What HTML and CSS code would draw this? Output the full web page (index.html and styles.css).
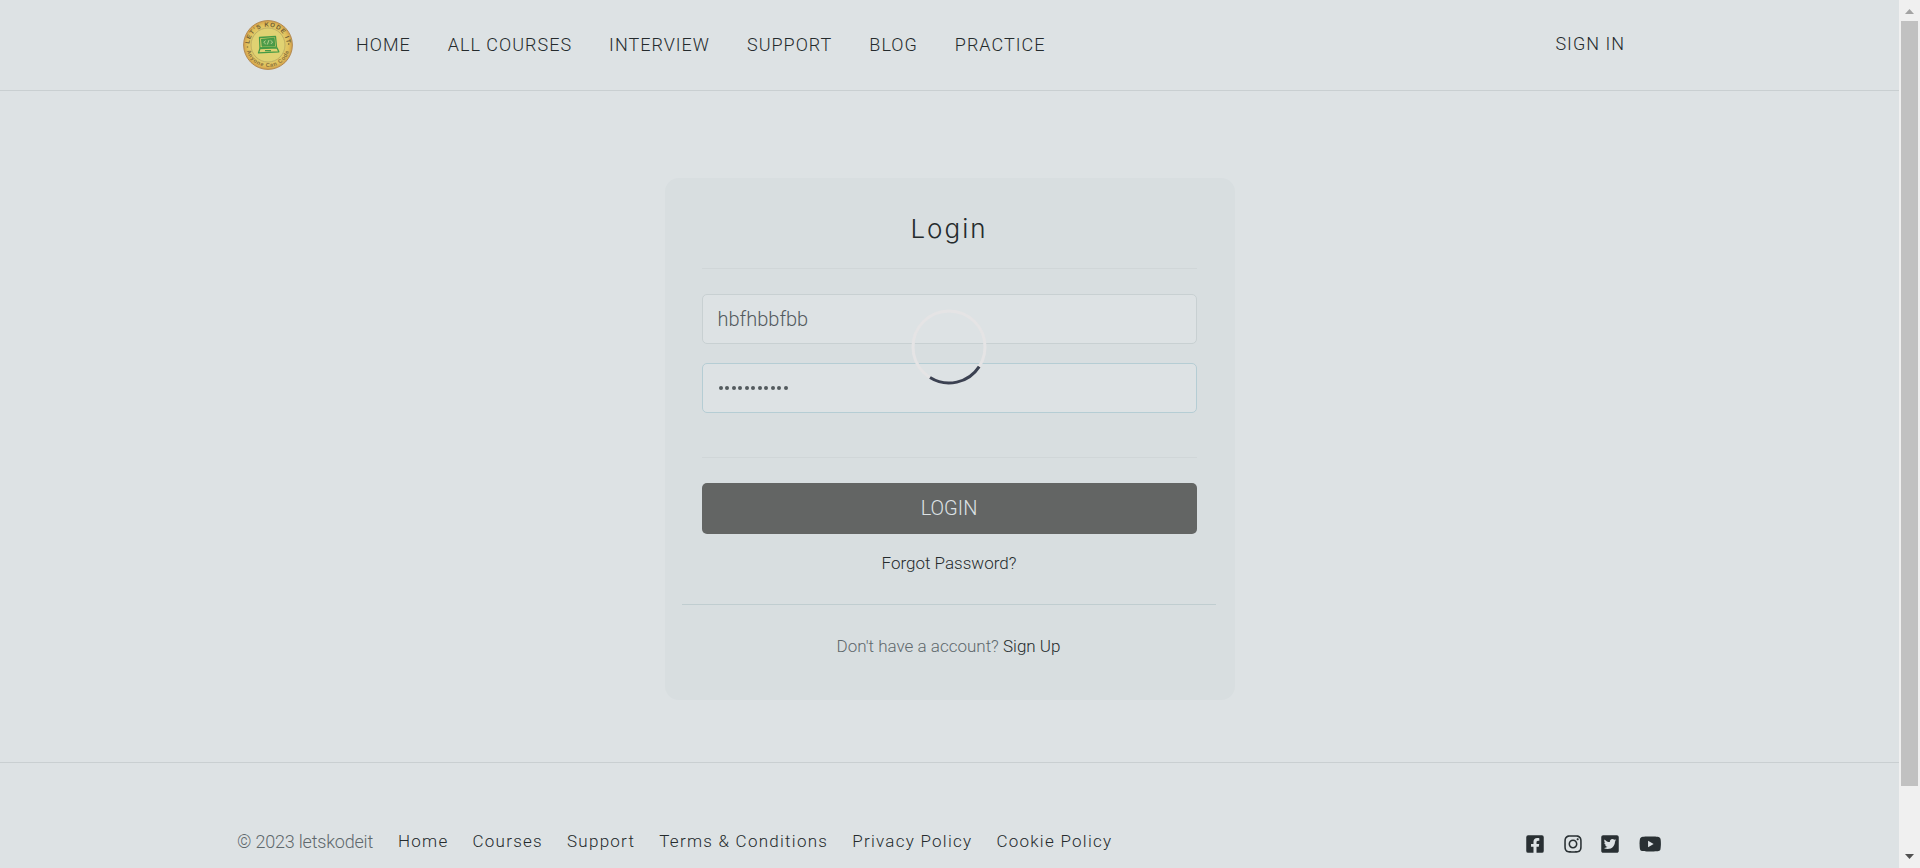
FILE: index.html
```html
<!DOCTYPE html>
<html lang="en">
<head>
<meta charset="utf-8">
<title>Login</title>
<link rel="stylesheet" href="styles.css">
</head>
<body>
<div class="window">
  <div class="page">
    <header class="header">
      <svg class="logo" viewBox="0 0 50 50">
        <defs>
          <path id="arc-top" d="M6.800 29A18.600 18.600 0 1 1 43.200 29"/>
          <path id="arc-bottom" d="M3 25A22 22 0 0 0 47 25"/>
          <radialGradient id="gold"><stop offset=".6" stop-color="#e1d373"/><stop offset=".85" stop-color="#e0c05c"/><stop offset="1" stop-color="#d4a04a"/></radialGradient>
        </defs>
        <circle cx="25" cy="25" r="24.400" fill="url(#gold)" stroke="#b28a51" stroke-width="1"/>
        <circle cx="25" cy="25" r="17" fill="#e0d272" stroke="#a9995a" stroke-width=".6"/>
        <text class="logo-text"><textPath href="#arc-top" startOffset="50%" text-anchor="middle">LET'S KODE IT</textPath></text>
        <text class="logo-text logo-text-low"><textPath href="#arc-bottom" startOffset="50%" text-anchor="middle">Anyone Can Code</textPath></text>
        <circle cx="4.500" cy="27" r=".8" fill="#8b7440"/><circle cx="45.700" cy="24" r=".8" fill="#6c5b35"/>
        <g fill="none" stroke="#459a45" stroke-width="1.300" stroke-linejoin="round">
          <path d="M16.500 17.500 32.500 16.500 33.500 27 17 28Z"/>
          <path d="M18.700 19.300 31 18.500 31.500 25.500 19.200 26Z" fill="#4f9c4c"/>
          <path d="M17 28.500 34 27.800 35.800 31.800 15.500 32.900ZM22 30.700H28"/>
        </g>
        <path d="M22.500 20.500 20.800 22.400 22.800 24M27.500 20.300 29.600 22 27.900 24M26 20 24.300 24.500" fill="none" stroke="#dce5a5" stroke-width=".7"/>
      </svg>
      <nav class="nav">
        <a>HOME</a><a>ALL COURSES</a><a>INTERVIEW</a><a>SUPPORT</a><a>BLOG</a><a>PRACTICE</a>
      </nav>
      <a class="sign-in">SIGN IN</a>
    </header>
    <main class="main">
      <section class="card">
        <h1 class="title">Login</h1>
        <form class="form">
          <div class="field"><span>hbfhbbfbb</span></div>
          <div class="field focused"><span class="dots"><i></i><i></i><i></i><i></i><i></i><i></i><i></i><i></i><i></i><i></i><i></i></span></div>
        </form>
        <div class="button">LOGIN</div>
        <a class="forgot">Forgot Password?</a>
        <p class="signup">Don't have a account? <a>Sign Up</a></p>
        <svg class="spinner" viewBox="0 0 76 76" fill="none" stroke-width="3">
          <circle cx="38" cy="38" r="36" stroke="#e5e4e5"/>
          <path d="M68.200 57.600A36 36 0 0 1 19 68.600" stroke="#3b4151"/>
        </svg>
      </section>
    </main>
    <footer class="footer">
      <span class="copyright">© 2023 letskodeit</span>
      <nav class="links">
        <a>Home</a><a>Courses</a><a>Support</a><a>Terms &amp; Conditions</a><a>Privacy Policy</a><a>Cookie Policy</a>
      </nav>
      <div class="social">
        <svg viewBox="0 0 448 512"><path d="M400 32H48A48 48 0 0 0 0 80v352a48 48 0 0 0 48 48h137.250V327.690h-63V256h63v-54.640c0-62.150 37-96.480 93.670-96.480 27.140 0 55.520 4.840 55.520 4.840v61h-31.270c-30.810 0-40.420 19.120-40.420 38.730V256h68.780l-11 71.690h-57.780V480H400a48 48 0 0 0 48-48V80a48 48 0 0 0-48-48z"/></svg>
        <svg viewBox="0 0 448 512"><path d="M224.100 141c-63.600 0-114.900 51.300-114.900 114.900s51.300 114.900 114.900 114.900S339 319.500 339 255.900 287.700 141 224.100 141zm0 189.600c-41.100 0-74.700-33.500-74.700-74.700s33.500-74.700 74.700-74.700 74.700 33.500 74.700 74.700-33.600 74.700-74.700 74.700zm146.400-194.300c0 14.900-12 26.800-26.800 26.800-14.900 0-26.800-12-26.800-26.800s12-26.800 26.800-26.800 26.800 12 26.800 26.800zm76.100 27.200c-1.700-35.900-9.900-67.700-36.200-93.900-26.200-26.200-58-34.400-93.900-36.200-37-2.100-147.900-2.100-184.900 0-35.800 1.700-67.600 9.900-93.900 36.100s-34.400 58-36.200 93.900c-2.100 37-2.100 147.900 0 184.900 1.700 35.900 9.900 67.700 36.200 93.900s58 34.400 93.900 36.200c37 2.100 147.900 2.100 184.900 0 35.900-1.700 67.700-9.900 93.900-36.200 26.200-26.200 34.400-58 36.200-93.900 2.100-37 2.100-147.800 0-184.800zM398.800 388c-7.800 19.600-22.900 34.700-42.600 42.600-29.500 11.700-99.500 9-132.100 9s-102.700 2.600-132.100-9c-19.600-7.800-34.700-22.900-42.600-42.600-11.700-29.500-9-99.500-9-132.100s-2.600-102.700 9-132.100c7.800-19.600 22.900-34.700 42.600-42.600 29.500-11.700 99.500-9 132.100-9s102.700-2.600 132.100 9c19.600 7.800 34.700 22.900 42.600 42.600 11.700 29.500 9 99.500 9 132.100s2.700 102.700-9 132.100z"/></svg>
        <svg viewBox="0 0 448 512"><path d="M400 32H48C21.500 32 0 53.500 0 80v352c0 26.500 21.500 48 48 48h352c26.500 0 48-21.500 48-48V80c0-26.500-21.500-48-48-48zm-48.900 158.800c.2 2.800.2 5.700.2 8.500 0 86.700-66 186.600-186.600 186.600-37.200 0-71.700-10.800-100.700-29.400 5.300.6 10.400.8 15.800.8 30.700 0 58.900-10.400 81.400-28-28.800-.6-53-19.500-61.300-45.500 10.100 1.500 19.200 1.500 29.600-1.200-30-6.100-52.500-32.500-52.500-64.400v-.8c8.700 4.900 18.900 7.900 29.600 8.300a65.447 65.447 0 0 1-29.200-54.600c0-12.200 3.200-23.400 8.900-33.100 32.300 39.800 80.800 65.800 135.200 68.600-9.300-44.500 24-80.600 64-80.600 18.900 0 35.900 7.900 47.900 20.700 14.800-2.800 29-8.300 41.600-15.800-4.900 15.200-15.200 28-28.800 36.100 13.200-1.400 26-5.100 37.800-10.200-8.900 13.100-20.100 24.700-32.900 34z"/></svg>
        <svg class="wide" viewBox="0 0 576 512"><path d="M549.655 124.083c-6.281-23.650-24.787-42.276-48.284-48.597C458.781 64 288 64 288 64S117.220 64 74.629 75.486c-23.497 6.322-42.003 24.947-48.284 48.597-11.412 42.867-11.412 132.305-11.412 132.305s0 89.438 11.412 132.305c6.281 23.650 24.787 41.500 48.284 47.821C117.220 448 288 448 288 448s170.780 0 213.371-11.486c23.497-6.321 42.003-24.171 48.284-47.821 11.412-42.867 11.412-132.305 11.412-132.305s0-89.438-11.412-132.305zm-317.510 213.508V175.185l142.739 81.205-142.739 81.201z"/></svg>
      </div>
    </footer>
  </div>
  <div class="scrollbar">
    <svg class="arrow" viewBox="0 0 9 5"><path d="M0 5 4.500 0 9 5Z" fill="#a3a3a3"/></svg>
    <div class="thumb"></div>
    <svg class="arrow" viewBox="0 0 9 5"><path d="M0 0H9L4.500 5Z" fill="#505050"/></svg>
  </div>
</div>
</body>
</html>
```
FILE: styles.css
```css
* { box-sizing: border-box; }
body { margin: 0; overflow: hidden; font-family: Roboto, "Liberation Sans", sans-serif; font-weight: 300; color: #5f696d; background: #dde2e4; }
.window { display: flex; height: 868px; }
.page { flex: 1; display: flex; flex-direction: column; }
.header { height: 91px; border-bottom: 1px solid #c9cfd1; display: flex; align-items: center; padding: 0 274px 0 243px; color: #252b2d; font-size: 18px; letter-spacing: 1px; }
.logo { width: 50px; height: 50px; flex: none; }
.logo-text { font: 700 6.200px "Liberation Sans", sans-serif; letter-spacing: .9px; fill: #715e35; }
.logo-text-low { font-size: 5.600px; letter-spacing: .6px; fill: #8a6f3c; }
.nav { display: flex; gap: 37px; margin-left: 63px; padding-bottom: 2px; }
.sign-in { margin-left: auto; padding-bottom: 4px; }
.main { height: 671px; padding-top: 87px; display: flex; justify-content: center; align-items: flex-start; }
.card { position: relative; width: 570px; height: 522px; border-radius: 14px; background: #d8dee0; padding: 0 38px 0 37px; text-align: center; }
.title { margin: 0; height: 91px; padding-top: 35px; border-bottom: 1px solid #d0d6d8; font: 300 26px/32px Inter, sans-serif; letter-spacing: 2px; color: #252b2d; }
.form { height: 189px; padding-top: 25px; border-bottom: 1px solid #d0d6d8; }
.field { height: 50px; border: 1px solid #c8d0d2; border-radius: 5px; background: #dde2e4; margin-bottom: 19px; padding: 0 15px; display: flex; align-items: center; font-size: 20px; color: #535a5e; }
.focused { border-color: #b5cdd4; }
.dots { display: flex; gap: 2.500px; padding-left: 1px; }
.dots i { width: 4px; height: 4px; border-radius: 50%; background: #535a5e; }
.button { margin-top: 25px; height: 51px; border-radius: 5px; background: #636564; color: #dde2e4; font-size: 20px; line-height: 51px; }
.forgot { display: block; margin-top: 17px; font-size: 17px; line-height: 24px; color: #252b2d; }
.signup { margin: 29px -19px 0 -20px; border-top: 1px solid #c0cdd0; padding-top: 29px; font-size: 17px; line-height: 24px; }
.signup a { color: #252b2d; }
.spinner { position: absolute; left: 246px; top: 131px; width: 76px; height: 76px; }
.footer { height: 106px; border-top: 1px solid #c9cfd1; padding: 66px 238px 0 237px; display: flex; align-items: flex-start; line-height: 24px; }
.copyright { font-size: 18px; letter-spacing: -.2px; padding-top: 1px; }
.links { display: flex; gap: 24px; margin-left: 25px; font-size: 17px; letter-spacing: 1.260px; color: #252b2d; }
.social { display: flex; gap: 19.500px; margin-left: auto; padding-top: 5px; }
.social svg { width: 18px; height: 20px; fill: #293033; }
.social .wide { width: 22.500px; }
.scrollbar { width: 21px; background: #f0f0f0; display: flex; flex-direction: column; align-items: center; padding: 9px 2px; }
.arrow { width: 9px; height: 5px; flex: none; }
.thumb { width: 17px; height: 765px; margin: 7px 0 68px; background: #c1c1c1; flex: none; }
```
